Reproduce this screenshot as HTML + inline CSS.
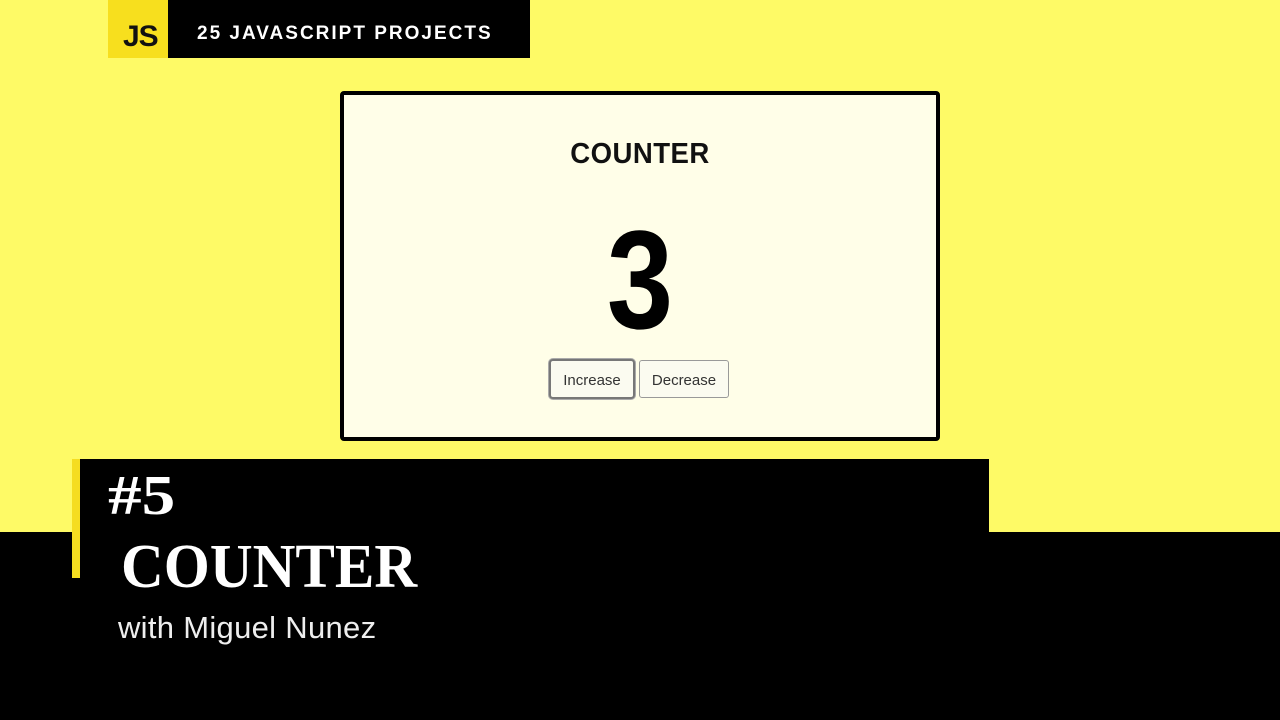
<!DOCTYPE html>
<html><head><style>
body{margin:0;width:1280px;height:720px;background:#fefa66;position:relative;overflow:hidden;font-family:"Liberation Sans",sans-serif}
div{position:absolute}
</style></head><body>
<div style="left:108px;top:0;width:422px;height:58px;background:#000"></div>
<div style="left:108px;top:0;width:60px;height:58px;background:#f7df1e"></div>
<div style="left:123px;top:20px;font-weight:bold;font-size:30px;color:#111;letter-spacing:-1px">JS</div>
<div style="left:197px;top:23px;font-weight:bold;font-size:19px;color:#fff;letter-spacing:2px">25 JAVASCRIPT PROJECTS</div>

<div style="left:340px;top:91px;width:592px;height:342px;background:#fffee8;border:4px solid #000;border-radius:4px"></div>
<div style="left:340px;top:138px;width:600px;text-align:center;font-size:29px;font-weight:bold;color:#111;letter-spacing:0.5px;transform:scaleX(0.95)">COUNTER</div>
<div style="left:340px;top:200px;width:600px;text-align:center;font-size:140px;line-height:160px;color:#000;font-weight:bold;transform:scaleX(0.85)">3</div>
<div style="left:549px;top:359px;width:82px;height:36px;border:2px solid #777;border-radius:4px;background:#fbfbf0;box-shadow:0 0 0 1px #aaa;font-size:15px;color:#333;text-align:center;line-height:40px">Increase</div>
<div style="left:639px;top:360px;width:88px;height:36px;border:1px solid #999;border-radius:3px;background:#fbfbf0;font-size:15px;color:#333;text-align:center;line-height:40px">Decrease</div>

<div style="left:80px;top:459px;width:909px;height:73px;background:#000"></div>
<div style="left:0;top:532px;width:1280px;height:188px;background:#000"></div>
<div style="left:72px;top:459px;width:8px;height:119px;background:#f5dd20"></div>
<div style="left:108px;top:464px;font-family:'Liberation Serif',serif;font-weight:bold;font-size:56px;color:#fff;transform:scaleX(1.2);transform-origin:left">#5</div>
<div style="left:121px;top:532px;font-family:'Liberation Serif',serif;font-weight:bold;font-size:62px;color:#fff;transform:scaleX(0.955);transform-origin:left">COUNTER</div>
<div style="left:118px;top:610px;font-size:31px;color:#eee;letter-spacing:0.3px">with Miguel Nunez</div>
</body></html>
